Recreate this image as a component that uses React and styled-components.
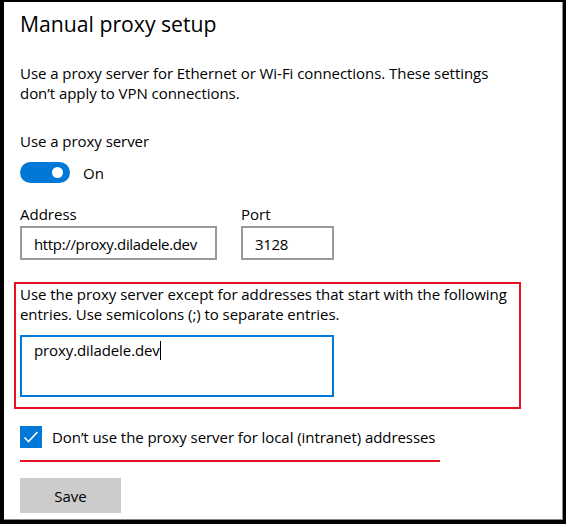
import React, { useState } from 'react';
import styled, { createGlobalStyle } from 'styled-components';

const accent = '#0078d7';
const annotation = '#e81123';

const GlobalStyle = createGlobalStyle`
  html, body {
    margin: 0;
    padding: 0;
    background: #fff;
  }
  body {
    font-family: "Open Sans", "Noto Sans", sans-serif;
    color: #000;
  }
`;

const Frame = styled.div`
  box-sizing: border-box;
  width: 566px;
  height: 524px;
  border-style: solid;
  border-color: #000;
  border-width: 2px 3px 4px 4px;
  box-shadow: inset -1px -1px 0 #8a8a8a;
  padding: 6px 0 0 16px;
  background: #fff;
  overflow: hidden;
`;

const Title = styled.h1`
  margin: 0;
  font-size: 21.2px;
  line-height: 32px;
  font-weight: 400;
`;

const Text = styled.p`
  margin: ${p => p.mt || 0}px 0 0;
  font-size: 15px;
  line-height: 20px;
  letter-spacing: -0.05px;
`;

const ToggleRow = styled.div`
  display: flex;
  align-items: center;
  gap: 13px;
  margin-top: 11px;
  font-size: 15px;
  line-height: 20px;
`;

const Track = styled.button`
  position: relative;
  width: 50px;
  height: 21px;
  border: none;
  border-radius: 11px;
  padding: 0;
  background: ${p => (p.on ? accent : '#fff')};
  box-shadow: ${p => (p.on ? 'none' : 'inset 0 0 0 2px #333')};
  cursor: pointer;

  &::after {
    content: '';
    position: absolute;
    top: 5px;
    left: ${p => (p.on ? '32px' : '6px')};
    width: 11px;
    height: 11px;
    border-radius: 50%;
    background: ${p => (p.on ? '#fff' : '#333')};
  }
`;

const Fields = styled.div`
  display: flex;
  gap: 24px;
  margin-top: 21px;
`;

const Field = styled.div`
  display: flex;
  flex-direction: column;
  gap: 2px;
`;

const Label = styled.span`
  font-size: 15px;
  line-height: 20px;
`;

const Input = styled.div`
  box-sizing: border-box;
  width: ${p => p.w}px;
  height: 34px;
  border: 2px solid #999;
  padding: 6px 0 0 12px;
  font-size: 15px;
  line-height: 20px;
  letter-spacing: -0.35px;
  white-space: nowrap;
  overflow: hidden;
`;

const Highlight = styled.div`
  box-sizing: border-box;
  width: 507px;
  margin: 22px 0 0 -6px;
  border: 2px solid ${annotation};
  padding: 0 0 10px 4px;
`;

const TextArea = styled.div`
  box-sizing: border-box;
  width: 314px;
  height: 62px;
  margin-top: 11px;
  border: 2px solid ${accent};
  padding: 3px 0 0 12px;
  font-size: 15px;
  line-height: 20px;
  letter-spacing: -0.1px;
`;

const Caret = styled.span`
  display: inline-block;
  width: 1px;
  height: 19px;
  background: #000;
  vertical-align: -4px;
`;

const CheckRow = styled.label`
  display: flex;
  align-items: center;
  gap: 10px;
  margin-top: 17px;
  font-size: 15px;
  line-height: 20px;
  letter-spacing: -0.07px;
  cursor: pointer;
`;

const Box = styled.span`
  display: flex;
  align-items: center;
  justify-content: center;
  width: 22px;
  height: 22px;
  background: ${p => (p.checked ? accent : '#fff')};
  box-shadow: ${p => (p.checked ? 'none' : 'inset 0 0 0 2px #333')};
`;

const Underline = styled.div`
  width: 420px;
  height: 2px;
  margin-top: 12px;
  background: ${annotation};
`;

const SaveButton = styled.button`
  display: block;
  width: 101px;
  height: 35px;
  margin-top: 16px;
  border: none;
  background: #ccc;
  font-family: inherit;
  font-size: 15px;
  color: #000;
  padding: 0;
  cursor: pointer;
`;

export default function App() {
  const [on, setOn] = useState(true);
  const [local, setLocal] = useState(true);

  return (
    <Frame>
      <GlobalStyle />
      <Title>Manual proxy setup</Title>
      <Text mt={23}>
        Use a proxy server for Ethernet or Wi-Fi connections. These settings
        <br />
        don’t apply to VPN connections.
      </Text>
      <Text mt={28}>Use a proxy server</Text>
      <ToggleRow>
        <Track on={on ? 1 : 0} onClick={() => setOn(!on)} aria-label="Use a proxy server" />
        <span>{on ? 'On' : 'Off'}</span>
      </ToggleRow>
      <Fields>
        <Field>
          <Label>Address</Label>
          <Input w={197}>http://proxy.diladele.dev</Input>
        </Field>
        <Field>
          <Label>Port</Label>
          <Input w={93}>3128</Input>
        </Field>
      </Fields>
      <Highlight>
        <Text>
          Use the proxy server except for addresses that start with the following
          <br />
          entries. Use semicolons (;) to separate entries.
        </Text>
        <TextArea>
          proxy.diladele.dev<Caret />
        </TextArea>
      </Highlight>
      <CheckRow onClick={() => setLocal(!local)}>
        <Box checked={local ? 1 : 0}>
          {local && (
            <svg width="16" height="14" viewBox="0 0 16 14">
              <polyline points="1.5,7.5 5.5,11.5 14.5,2" fill="none" stroke="#fff" strokeWidth="1.6" />
            </svg>
          )}
        </Box>
        <span>Don’t use the proxy server for local (intranet) addresses</span>
      </CheckRow>
      <Underline />
      <SaveButton>Save</SaveButton>
    </Frame>
  );
}
